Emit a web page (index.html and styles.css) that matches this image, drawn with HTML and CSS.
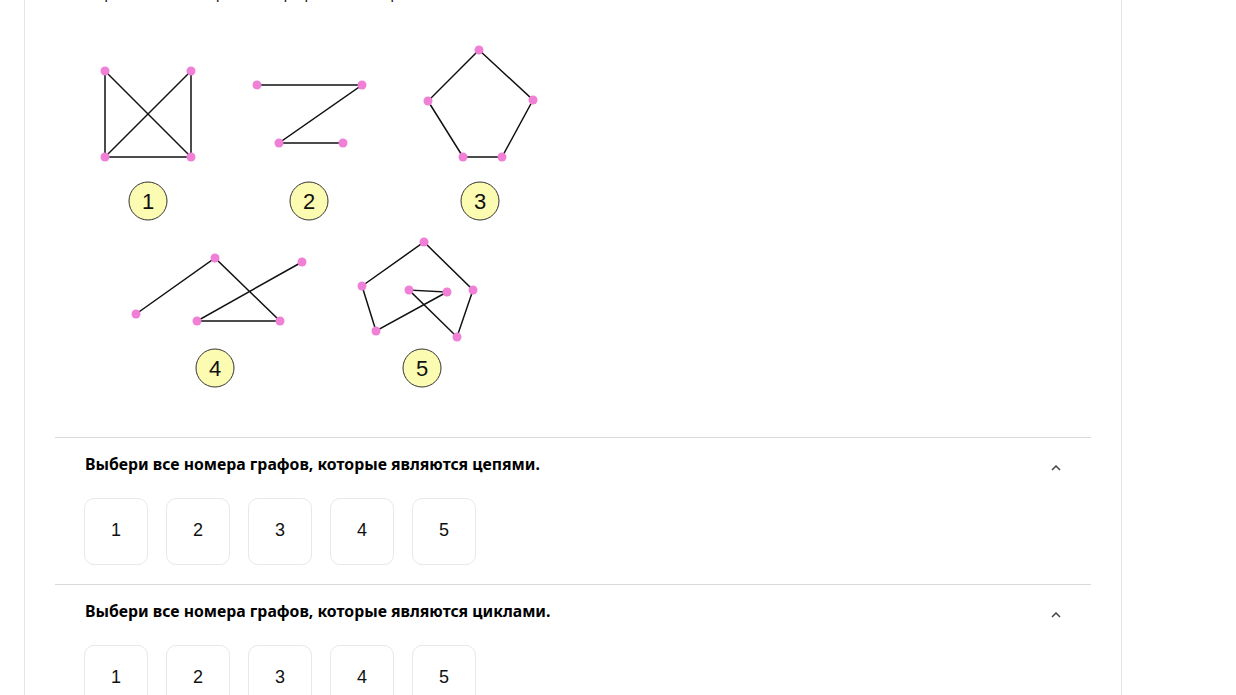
FILE: index.html
```html
<!DOCTYPE html>
<html lang="ru">
<head>
<meta charset="utf-8">
<title>Графы</title>
<link rel="stylesheet" href="styles.css">
</head>
<body>
<div class="card">
  <p class="intro">Перед тобой изображены графы. Рассмотри их.</p>
  <svg class="figure" width="520" height="435" viewBox="55 2 520 435" xmlns="http://www.w3.org/2000/svg">
    <g stroke="#111" stroke-width="1.5" fill="none">
      <line x1="105" y1="71" x2="105" y2="157"/>
      <line x1="191" y1="71" x2="191" y2="157"/>
      <line x1="105" y1="157" x2="191" y2="157"/>
      <line x1="105" y1="71" x2="191" y2="157"/>
      <line x1="191" y1="71" x2="105" y2="157"/>
      <polyline points="257,85 362,85 279,143 343,143"/>
      <polygon points="479,50 533,100 502,157 463,157 428,101"/>
      <polyline points="136,314 215,258 280,321 197,321 302,262"/>
      <polygon points="362,286 424,242 473,290 457,337 409,290 447,292 376,331"/>
    </g>
    <g fill="#f07fd6">
      <circle cx="105" cy="71" r="4.5"/><circle cx="191" cy="71" r="4.5"/>
      <circle cx="105" cy="157" r="4.5"/><circle cx="191" cy="157" r="4.5"/>
      <circle cx="257" cy="85" r="4.5"/><circle cx="362" cy="85" r="4.5"/>
      <circle cx="279" cy="143" r="4.5"/><circle cx="343" cy="143" r="4.5"/>
      <circle cx="479" cy="50" r="4.5"/><circle cx="533" cy="100" r="4.5"/>
      <circle cx="502" cy="157" r="4.5"/><circle cx="463" cy="157" r="4.5"/>
      <circle cx="428" cy="101" r="4.5"/>
      <circle cx="136" cy="314" r="4.5"/><circle cx="215" cy="258" r="4.5"/>
      <circle cx="302" cy="262" r="4.5"/><circle cx="197" cy="321" r="4.5"/>
      <circle cx="280" cy="321" r="4.5"/>
      <circle cx="424" cy="242" r="4.5"/><circle cx="362" cy="286" r="4.5"/>
      <circle cx="473" cy="290" r="4.5"/><circle cx="409" cy="290" r="4.5"/>
      <circle cx="447" cy="292" r="4.5"/><circle cx="376" cy="331" r="4.5"/>
      <circle cx="457" cy="337" r="4.5"/>
    </g>
    <g fill="#fcfbb2" stroke="#333" stroke-width="1">
      <circle cx="148" cy="201" r="19"/>
      <circle cx="309" cy="201" r="19"/>
      <circle cx="480" cy="201" r="19"/>
      <circle cx="215" cy="368" r="19"/>
      <circle cx="422" cy="368" r="19"/>
    </g>
    <g font-family="Liberation Sans, Arial, sans-serif" font-size="22" fill="#111" text-anchor="middle">
      <text x="148" y="209">1</text>
      <text x="309" y="209">2</text>
      <text x="480" y="209">3</text>
      <text x="215" y="376">4</text>
      <text x="422" y="376">5</text>
    </g>
  </svg>

  <section class="question">
    <div class="q-head">
      <h3 class="q-title">Выбери все номера графов, которые являются цепями.</h3>
      <svg class="chevron" width="10" height="6" viewBox="0 0 10 6"><polyline points="1,5 5,1 9,5" fill="none" stroke="#444" stroke-width="1.5"/></svg>
    </div>
    <div class="options">
      <button class="opt">1</button>
      <button class="opt">2</button>
      <button class="opt">3</button>
      <button class="opt">4</button>
      <button class="opt">5</button>
    </div>
  </section>

  <section class="question">
    <div class="q-head">
      <h3 class="q-title">Выбери все номера графов, которые являются циклами.</h3>
      <svg class="chevron" width="10" height="6" viewBox="0 0 10 6"><polyline points="1,5 5,1 9,5" fill="none" stroke="#444" stroke-width="1.5"/></svg>
    </div>
    <div class="options">
      <button class="opt">1</button>
      <button class="opt">2</button>
      <button class="opt">3</button>
      <button class="opt">4</button>
      <button class="opt">5</button>
    </div>
  </section>
</div>
</body>
</html>
```
FILE: styles.css
```css
html, body {
  margin: 0;
  padding: 0;
  background: #fff;
}
body {
  font-family: "Noto Sans", "Open Sans", sans-serif;
  color: #111;
  overflow: hidden;
}
.card {
  margin: -18px 0 0 24px;
  border-left: 1px solid #e6e6e6;
  border-right: 1px solid #e6e6e6;
  padding: 0 30px;
  box-sizing: content-box;
  width: 1036px;
}
.intro {
  margin: 0;
  padding-left: 30px;
  font-size: 15px;
  line-height: 20px;
}
.figure {
  display: block;
}
.question {
  border-top: 1px solid #d9d9d9;
  padding: 15px 30px 19px;
}
.q-head {
  display: flex;
  justify-content: space-between;
  align-items: center;
  height: 22px;
}
.q-title {
  margin: 0;
  font-size: 15.8px;
  font-weight: 700;
  line-height: 22px;
  color: #000;
}
.chevron {
  display: block;
  margin-top: 8px;
}
.options {
  display: flex;
  gap: 18px;
  margin-top: 23px;
  margin-left: -1px;
}
.opt {
  width: 64px;
  height: 67px;
  border: 1px solid #e8e8e8;
  border-radius: 10px;
  background: #fff;
  font-family: "Liberation Sans", Arial, sans-serif;
  font-size: 18px;
  color: #111;
  padding: 0 0 3px;
  cursor: pointer;
}
```
